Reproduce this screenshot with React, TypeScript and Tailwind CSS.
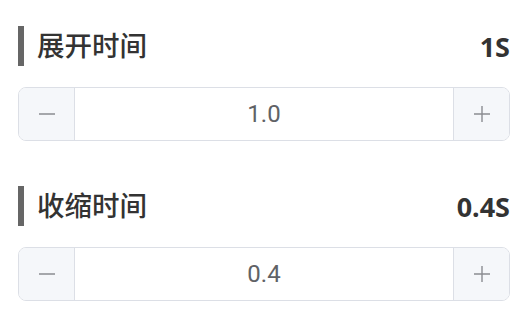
import React from "react";

function Minus() {
  return (
    <svg width="18" height="18" viewBox="0 0 18 18">
      <line x1="1" y1="9" x2="17" y2="9" stroke="#8a8c91" strokeWidth="1.6" />
    </svg>
  );
}
function Plus() {
  return (
    <svg width="18" height="18" viewBox="0 0 18 18">
      <line x1="1" y1="9" x2="17" y2="9" stroke="#8a8c91" strokeWidth="1.4" />
      <line x1="9" y1="1" x2="9" y2="17" stroke="#8a8c91" strokeWidth="1.4" />
    </svg>
  );
}

function Section({ title, badge, value }: { title: string; badge: string; value: string }) {
  return (
    <div>
      <div className="flex h-[40px] items-center justify-between">
        <div className="flex h-[40px] items-center border-l-[6px] border-[#666666] pl-[13px] text-[27.5px] font-medium leading-none text-[#333333]">
          {title}
        </div>
        <div className="text-[27px] font-bold leading-none text-[#333333]">{badge}</div>
      </div>
      <div className="mt-[21px] flex h-[54px] overflow-hidden rounded-[8px] border-[1.5px] border-[#dcdfe6]">
        <div className="flex w-[56px] items-center justify-center border-r-[1.5px] border-[#dcdfe6] bg-[#f5f7fa]">
          <Minus />
        </div>
        <div className="flex flex-1 items-center justify-center bg-white font-['Roboto',sans-serif] text-[24px] text-[#606266]">
          {value}
        </div>
        <div className="flex w-[56px] items-center justify-center border-l-[1.5px] border-[#dcdfe6] bg-[#f5f7fa]">
          <Plus />
        </div>
      </div>
    </div>
  );
}

export default function App() {
  return (
    <div
      className="h-[322px] w-[526px] bg-white px-[18px] pt-[26px]"
      style={{ fontFamily: '"Noto Sans", "Noto Sans CJK SC", sans-serif' }}
    >
      <div className="w-[492px]">
        <Section title="展开时间" badge="1S" value="1.0" />
        <div className="h-[45px]" />
        <Section title="收缩时间" badge="0.4S" value="0.4" />
      </div>
    </div>
  );
}
